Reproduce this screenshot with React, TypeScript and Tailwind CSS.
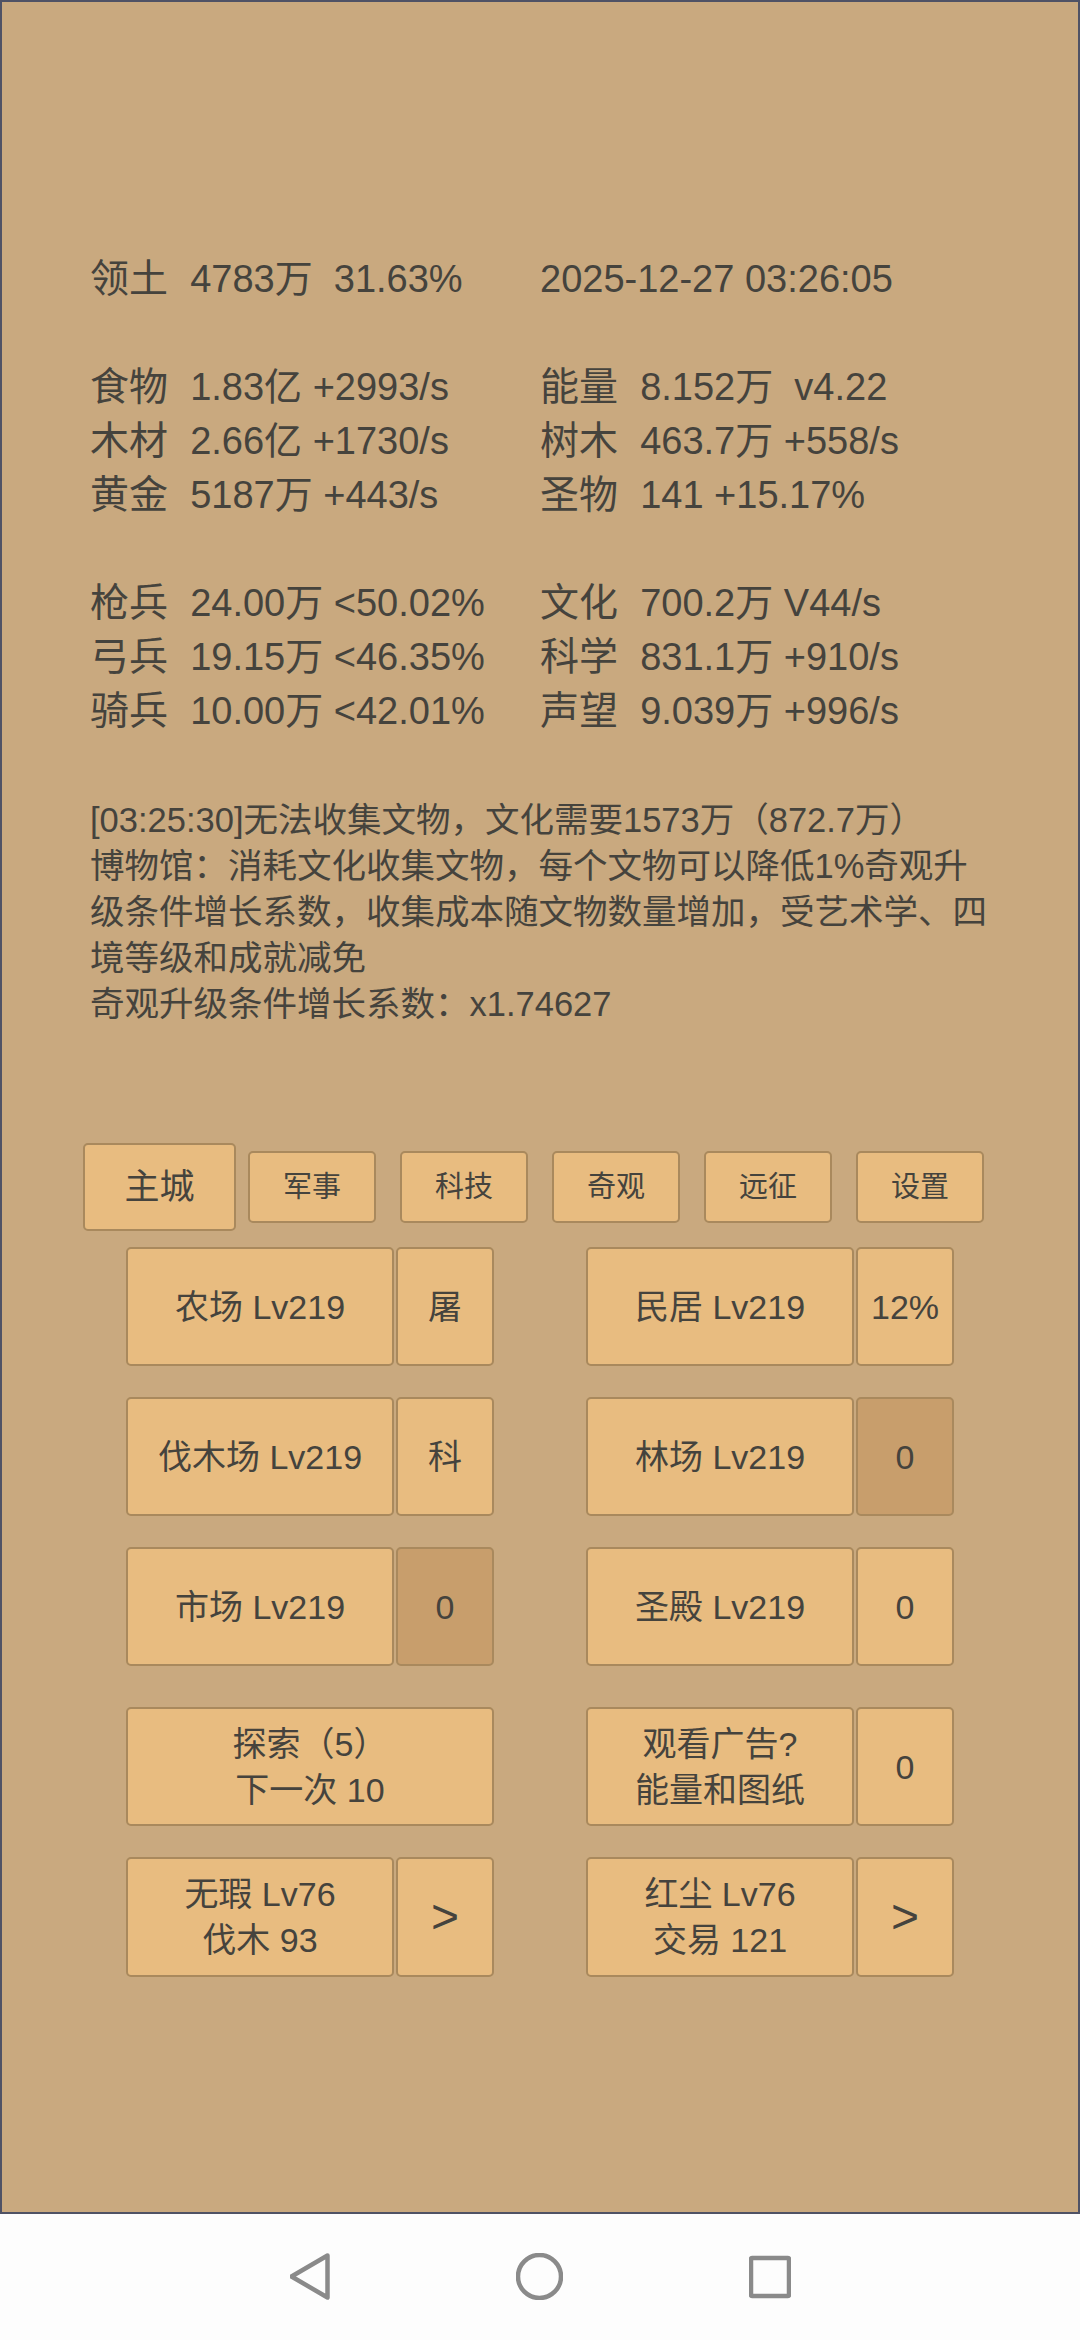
import React from 'react';

const stats = [
  [['领土', '  4783万  31.63%', '2025-12-27 03:26:05']],
  [
    ['食物', '  1.83亿 +2993/s', '能量', '  8.152万  v4.22'],
    ['木材', '  2.66亿 +1730/s', '树木', '  463.7万 +558/s'],
    ['黄金', '  5187万 +443/s', '圣物', '  141 +15.17%'],
  ],
  [
    ['枪兵', '  24.00万 <50.02%', '文化', '  700.2万 V44/s'],
    ['弓兵', '  19.15万 <46.35%', '科学', '  831.1万 +910/s'],
    ['骑兵', '  10.00万 <42.01%', '声望', '  9.039万 +996/s'],
  ],
];

const tabs = ['军事', '科技', '奇观', '远征', '设置'];

function Label({ children }: { children: React.ReactNode }) {
  return <span className="mr-[1px] text-[39px]">{children}</span>;
}

function Btn({ children, className = '', dark = false }: { children: React.ReactNode; className?: string; dark?: boolean }) {
  return (
    <button
      className={`flex items-center justify-center rounded-[5px] border-2 border-[#a9895d] text-center leading-[46px] ${dark ? 'bg-[#c89e6c]' : 'bg-[#e8bc80]'} ${className}`}
    >
      {children}
    </button>
  );
}

function Pair({ main, side, dark }: { main: React.ReactNode; side: React.ReactNode; dark?: boolean }) {
  return (
    <div className="flex h-full gap-[2px]">
      <Btn className="w-[268px]">{main}</Btn>
      <Btn className="w-[98px]" dark={dark}>{side}</Btn>
    </div>
  );
}

function Row({ left, right, className = '' }: { left: React.ReactNode; right: React.ReactNode; className?: string }) {
  return (
    <div className={`flex gap-[92px] ${className}`}>
      <div className="w-[368px]">{left}</div>
      <div className="w-[368px]">{right}</div>
    </div>
  );
}

export default function App() {
  return (
    <div className="flex h-[2340px] w-[1080px] flex-col bg-[#fdfdfd] font-['Liberation_Sans','Noto_Sans_CJK_SC',sans-serif] text-[#45433d]">
      <div className="box-border h-[2214px] border-2 border-[#4f5265] bg-[#c9a97f]">
        <div className="pl-[88px] pt-[250px] text-[38px] leading-[54px]">
          {stats.map((group, i) => (
            <div key={i} className="pb-[54px]">
              {group.map((row, j) => (
                <div key={j} className="grid h-[54px] grid-cols-[450px_1fr] whitespace-pre">
                  <div><Label>{row[0]}</Label>{row[1]}</div>
                  {row.length === 3 ? (
                    <div>{row[2]}</div>
                  ) : (
                    <div><Label>{row[2]}</Label>{row[3]}</div>
                  )}
                </div>
              ))}
            </div>
          ))}
        </div>

        <div className="mt-[5px] w-[995px] pl-[88px] text-[34.5px] leading-[46px]">
          <div>[03:25:30]无法收集文物，文化需要1573万（872.7万）</div>
          <div>博物馆：消耗文化收集文物，每个文物可以降低1%奇观升级条件增长系数，收集成本随文物数量增加，受艺术学、四境等级和成就减免</div>
          <div>奇观升级条件增长系数：x1.74627</div>
        </div>

        <div className="mt-[116px] flex items-center pl-[81px]">
          <Btn className="mr-[12px] h-[88px] w-[153px] text-[35px]">主城</Btn>
          <div className="flex gap-[24px]">
            {tabs.map((t) => (
              <Btn key={t} className="h-[72px] w-[128px] text-[29px]">{t}</Btn>
            ))}
          </div>
        </div>

        <div className="mt-[16px] pl-[124px] text-[34px]">
          <Row className="h-[119px]" left={<Pair main="农场 Lv219" side="屠" />} right={<Pair main="民居 Lv219" side="12%" />} />
          <Row className="mt-[31px] h-[119px]" left={<Pair main="伐木场 Lv219" side="科" />} right={<Pair main="林场 Lv219" side="0" dark />} />
          <Row className="mt-[31px] h-[119px]" left={<Pair main="市场 Lv219" side="0" dark />} right={<Pair main="圣殿 Lv219" side="0" />} />
          <Row
            className="mt-[41px] h-[119px]"
            left={<Btn className="h-full w-full">探索（5）<br />下一次 10</Btn>}
            right={<Pair main={<>观看广告?<br />能量和图纸</>} side="0" />}
          />
          <Row
            className="mt-[31px] h-[120px]"
            left={<Pair main={<>无瑕 Lv76<br />伐木 93</>} side={<span className="text-[48px]">&gt;</span>} />}
            right={<Pair main={<>红尘 Lv76<br />交易 121</>} side={<span className="text-[48px]">&gt;</span>} />}
          />
        </div>
      </div>

      <div className="flex justify-center gap-[186px] pt-[39px]">
        <svg width="40" height="47" viewBox="0 0 40 47" fill="none" stroke="#8a8a8a" strokeWidth="4.5" strokeLinejoin="round">
          <path d="M37.5 2.5 L1.5 23.5 L37.5 44.5 Z" />
        </svg>
        <svg width="47" height="47" viewBox="0 0 47 47" fill="none" stroke="#8a8a8a" strokeWidth="4.5">
          <circle cx="23.5" cy="23.5" r="21.5" />
        </svg>
        <svg width="42" height="47" viewBox="0 0 42 47" fill="none" stroke="#8a8a8a" strokeWidth="4.5" strokeLinejoin="round">
          <rect x="2" y="5" width="38" height="38" rx="1" />
        </svg>
      </div>
    </div>
  );
}
